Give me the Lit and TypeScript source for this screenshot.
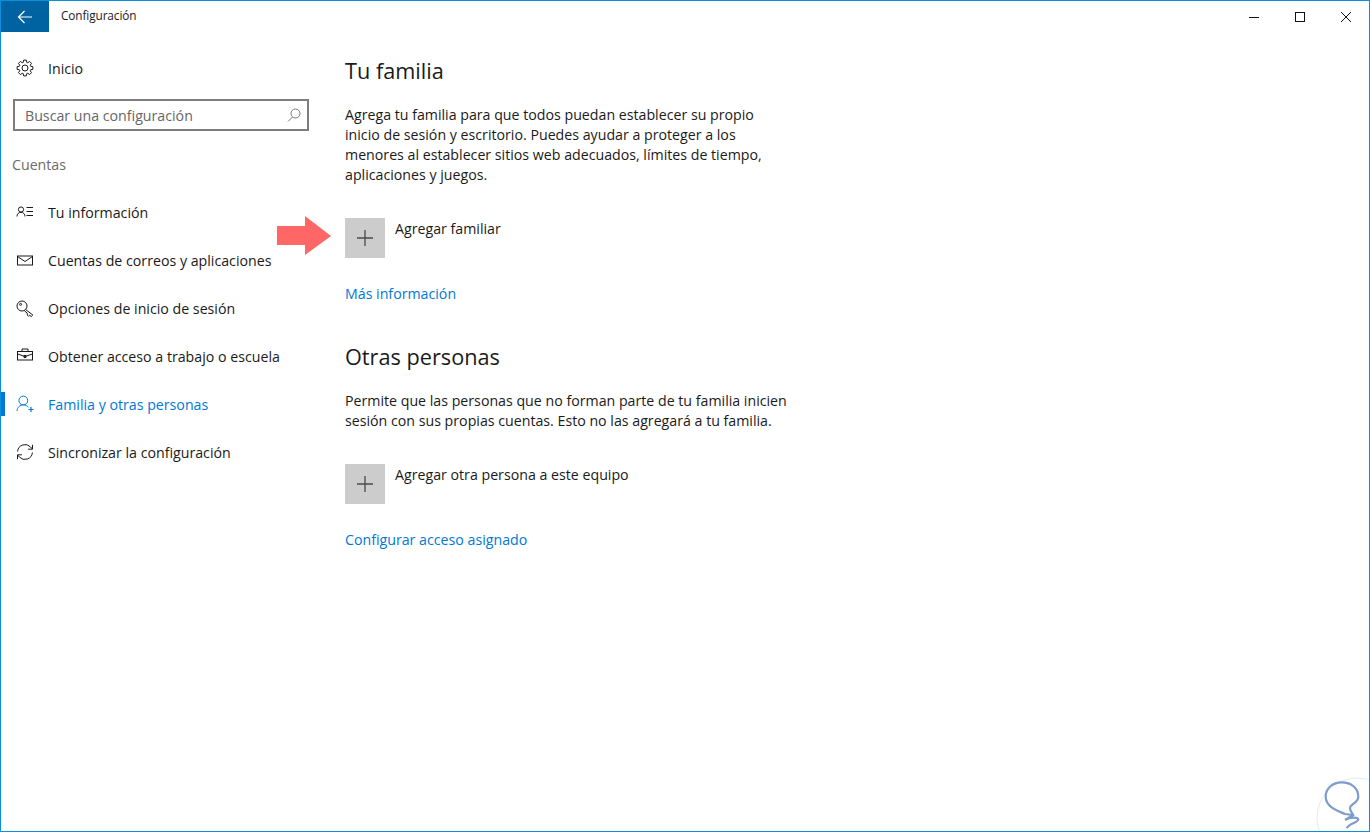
import { LitElement, html, css, svg } from "lit";
import { customElement } from "lit/decorators.js";

const I = (c: unknown, color = "#1a1a1a") => html`<svg class="ico" viewBox="0 0 20 20" fill="none" stroke=${color} stroke-width="1">${c}</svg>`;

function gearPath(): string {
  const pts: string[] = [];
  const teeth = 8;
  for (let i = 0; i < teeth; i++) {
    const a = (i * 2 * Math.PI) / teeth;
    const d = [[-0.3, 5.9], [-0.17, 8], [0.17, 8], [0.3, 5.9]];
    for (const [o, r] of d) {
      pts.push(`${(10 + r * Math.sin(a + o)).toFixed(2)} ${(10 - r * Math.cos(a + o)).toFixed(2)}`);
    }
  }
  return "M" + pts.join("L") + "Z";
}

const gear = svg`<circle cx="10" cy="10" r="3"/><path stroke-linejoin="round" d=${gearPath()}/>`;
const person = svg`<circle cx="6" cy="7.500" r="2.600"/><path d="M2 14.500c0-2.400 1.600-4.200 4-4.200s4 1.800 4 4.200"/><path d="M11.500 5.500H18M11.500 9.500H18M11.500 13.500H18"/>`;
const mail = svg`<rect x="2.500" y="6" width="15" height="9"/><path d="M2.500 6.500l7.500 5 7.500-5"/>`;
const key = svg`<circle cx="7" cy="8" r="5"/><circle cx="5.600" cy="6.400" r="1"/><path d="M10.600 11.500l7.200 5.500-1.600 1.600-1.500-1.300-1.100 1-1.200-1.200-.2-2-2.800-2.400"/>`;
const brief = svg`<rect x="2.500" y="5.500" width="15" height="8.500"/><path d="M7 5.500V3h6v2.500M2.500 8l7.500 2.500L17.500 8"/><path d="M9 9.500h2v2H9z"/>`;
const fam = svg`<circle cx="8.300" cy="6.500" r="4.400"/><path d="M2 17c.3-3.700 3-6.200 6.300-6.200 2.200 0 4 .9 5.200 2.500"/><path d="M13.500 15.500h5M16 13v5" stroke-width="1.200"/>`;
const sync = svg`<path d="M2.600 9.500A7.500 7.500 0 0 1 15.600 5l1.800 2"/><path d="M17.500 2.800V7.200h-4.400"/><path d="M17.400 10.500A7.500 7.500 0 0 1 4.400 15l-1.800-2"/><path d="M2.500 17.200V12.800h4.400"/>`;

@customElement("app-root")
export class AppRoot extends LitElement {
  static styles = css`
    :host { display: block; width: 1370px; height: 832px; font-family: "Open Sans", "Noto Sans", sans-serif; color: #1a1a1a; }
    * { box-sizing: border-box; }
    .window { position: relative; width: 1370px; height: 832px; border: 1px solid #0a8fdc; background: #fff; display: flex; flex-direction: column; overflow: hidden; }
    .titlebar { height: 31px; display: flex; align-items: center; flex: none; }
    .back { width: 48px; height: 31px; background: #0063a1; display: flex; align-items: center; justify-content: center; }
    .title { margin: 0 0 4px 12px; font-size: 11.800px; letter-spacing: -.1px; }
    .controls { margin-left: auto; display: flex; }
    .ctl { width: 46px; height: 31px; display: flex; align-items: center; justify-content: center; }
    .body { flex: 1; display: flex; }
    .side { width: 344px; flex: none; display: flex; flex-direction: column; }
    .row { height: 48px; display: flex; align-items: center; padding-left: 14px; font-size: 14.200px; position: relative; }
    .row span { margin-left: 13px; white-space: nowrap; }
    .ico { width: 20px; height: 20px; flex: none; }
    .home { margin-top: 12px; }
    .search { margin: 7px 0 0 12px; width: 296px; height: 32px; border: 2px solid #7d7d7d; display: flex; align-items: center; justify-content: space-between; padding: 0 5px 0 10px; color: #666; font-size: 14.200px; }
    .group { color: #6b6b6b; font-size: 14.200px; margin: 24px 0 0 11px; height: 20px; line-height: 20px; }
    .list { margin-top: 13px; display: flex; flex-direction: column; }
    .active { color: #0078d7; }
    .active::before { content: ""; position: absolute; left: 0; top: 12px; width: 4px; height: 24px; background: #0078d7; }
    .main { flex: 1; padding-top: 23px; }
    h2 { font-weight: 400; font-size: 21.700px; line-height: 32px; margin: 0; color: #1a1a1a; }
    p { margin: 0; font-size: 14.200px; line-height: 20px; width: 444px; }
    .p1 { margin-top: 18px; }
    .add { display: flex; align-items: flex-start; font-size: 14.200px; }
    .tile { width: 40px; height: 40px; background: #cccccc; display: flex; align-items: center; justify-content: center; margin-right: 10px; position: relative; }
    .add span { line-height: 20px; margin-top: 1px; }
    .a1 { margin-top: 33px; }
    .a2 { margin-top: 33px; }
    .link { color: #0078d7; font-size: 14.200px; line-height: 20px; margin-top: 26px; }
    .h2b { margin-top: 37px; }
    .p2 { margin-top: 18px; }
    .arrow { position: absolute; left: -68px; top: -2px; }
    .mark { position: absolute; right: -1px; bottom: -2px; }
  `;

  render() {
    const plus = html`<svg width="16" height="16" viewBox="0 0 16 16" stroke="#4a4a4a" stroke-width="1.300"><path d="M8 0v16M0 8h16"/></svg>`;
    return html`<div class="window">
      <div class="titlebar">
        <div class="back"><svg width="16" height="14" viewBox="0 0 16 14" fill="none" stroke="#fff" stroke-width="1.200"><path d="M15 7H1.500M7.500 1l-6 6 6 6"/></svg></div>
        <div class="title">Configuración</div>
        <div class="controls">
          <div class="ctl"><svg width="12" height="12" stroke="#111"><path d="M1 6.500h10"/></svg></div>
          <div class="ctl"><svg width="12" height="12" fill="none" stroke="#111"><rect x="1.500" y="1.500" width="9" height="9"/></svg></div>
          <div class="ctl"><svg width="12" height="12" stroke="#111"><path d="M1 1l10 10M11 1L1 11"/></svg></div>
        </div>
      </div>
      <div class="body">
        <nav class="side">
          <div class="row home">${I(gear)}<span>Inicio</span></div>
          <div class="search"><span>Buscar una configuración</span><svg width="16" height="16" viewBox="0 0 16 16" fill="none" stroke="#777"><circle cx="9.500" cy="6.500" r="4.500"/><path d="M6.500 10L2 14.500"/></svg></div>
          <div class="group">Cuentas</div>
          <div class="list">
            <div class="row">${I(person)}<span>Tu información</span></div>
            <div class="row">${I(mail)}<span>Cuentas de correos y aplicaciones</span></div>
            <div class="row">${I(key)}<span>Opciones de inicio de sesión</span></div>
            <div class="row">${I(brief)}<span>Obtener acceso a trabajo o escuela</span></div>
            <div class="row active">${I(fam, "#0078d7")}<span>Familia y otras personas</span></div>
            <div class="row">${I(sync)}<span>Sincronizar la configuración</span></div>
          </div>
        </nav>
        <main class="main">
          <h2>Tu familia</h2>
          <p class="p1">Agrega tu familia para que todos puedan establecer su propio inicio de sesión y escritorio. Puedes ayudar a proteger a los menores al establecer sitios web adecuados, límites de tiempo, aplicaciones y juegos.</p>
          <div class="add a1"><div class="tile">${plus}<svg class="arrow" width="54" height="39" viewBox="0 0 54 39" fill="#ff6666"><path d="M0 10h28V0l26 20-26 19V29H0z"/></svg></div><span>Agregar familiar</span></div>
          <div class="link">Más información</div>
          <h2 class="h2b">Otras personas</h2>
          <p class="p2">Permite que las personas que no forman parte de tu familia inicien sesión con sus propias cuentas. Esto no las agregará a tu familia.</p>
          <div class="add a2"><div class="tile">${plus}</div><span>Agregar otra persona a este equipo</span></div>
          <div class="link">Configurar acceso asignado</div>
        </main>
      </div>
      <svg class="mark" width="62" height="62" viewBox="0 0 62 62" fill="none"><circle cx="49" cy="47" r="40" fill="#fff" stroke="#e4ebf5"/><path d="M37 43C30 40 17.700 36 17.700 25.700 17.700 17 25 11.300 33.700 11.300 43 11.300 50.300 17 50.300 25.700 50.300 32 42 33 42 37.300 42 40 44 42 45.300 44L37 49C42 46 50 46 50.300 48.300 50.500 51 40 53 38.700 57.300M37 43L45 44" stroke="#7c9ccb" stroke-width="2.200"/></svg>
    </div>`;
  }
}
